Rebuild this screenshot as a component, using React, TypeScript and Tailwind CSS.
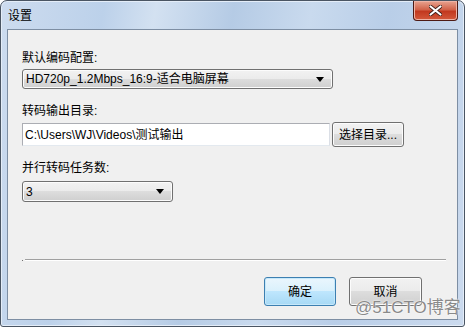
import React from "react";

const font = { fontFamily: '"Liberation Sans", "Noto Sans CJK SC", sans-serif' };

function ComboBox({ value, width }: { value: string; width: string }) {
  return (
    <div
      className={`flex h-full items-center justify-between rounded-[3px] border border-[#707070] bg-[linear-gradient(#f2f2f2_0%,#ebebeb_50%,#dddddd_50%,#cfcfcf_100%)] pl-[3px] pr-[8px] shadow-[inset_0_0_0_1px_#fcfcfc] ${width}`}
    >
      <span className="text-[12px] leading-none text-black">{value}</span>
      <svg width="8" height="5" viewBox="0 0 8 5">
        <path d="M0 0 H8 L4 5 Z" fill="#000" />
      </svg>
    </div>
  );
}

export default function App() {
  return (
    <div className="relative h-[327px] w-[465px] overflow-hidden" style={font}>
      <div className="flex h-full w-full flex-col rounded-t-[7px] rounded-b-[3px] border border-[#4a5563] bg-[linear-gradient(100deg,#cddcef_0%,#bcd1ea_20%,#d3e1f1_30%,#b5cbe5_45%,#c9daee_60%,#b9cee8_75%,#cbdaee_100%)] px-[6px] pb-[6px] shadow-[inset_0_0_0_1px_#e4edf8]">
        {/* title bar */}
        <div className="flex h-[28px] shrink-0 items-start justify-between">
          <span className="pl-[1px] pt-[8px] text-[12px] leading-[14px] text-black">设置</span>
          <div className="flex h-[20px] w-[45px] items-center justify-center rounded-b-[4px] border border-t-0 border-[#4d1a14] bg-[linear-gradient(#e8a491_0%,#d2634a_45%,#c2391f_55%,#d4593b_100%)] shadow-[inset_0_0_0_1px_#eeb3a5]">
            <svg width="13" height="11" viewBox="0 0 13 11">
              <path d="M1.5 1.5 L11.5 9.5 M11.5 1.5 L1.5 9.5" stroke="#3a1a14" strokeWidth="3.6" strokeLinecap="round" />
              <path d="M1.5 1.5 L11.5 9.5 M11.5 1.5 L1.5 9.5" stroke="#ffffff" strokeWidth="2.2" strokeLinecap="round" />
            </svg>
          </div>
        </div>

        {/* client area */}
        <div className="flex flex-1 flex-col border border-[#7d8ea3] bg-[#f0f0f0] pl-[14px] pr-[11px]">
          <div className="mt-[20px] h-[16px] text-[12px] leading-[16px] text-black">默认编码配置:</div>
          <div className="mt-[3px] h-[20px]">
            <ComboBox value="HD720p_1.2Mbps_16:9-适合电脑屏幕" width="w-[311px]" />
          </div>

          <div className="mt-[14px] h-[16px] text-[12px] leading-[16px] text-black">转码输出目录:</div>
          <div className="mt-[3px] flex h-[25px] items-center gap-[2px]">
            <div className="flex h-[23px] w-[308px] items-center border border-[#abadb3] border-b-[#e3e9ef] border-r-[#dbdfe6] bg-white pl-[2px] text-[12px] text-black">
              C:\Users\WJ\Videos\测试输出
            </div>
            <button className="flex h-[25px] w-[72px] items-center justify-center rounded-[3px] border border-[#707070] bg-[linear-gradient(#f2f2f2_0%,#ebebeb_50%,#dddddd_50%,#cfcfcf_100%)] text-[12px] text-black shadow-[inset_0_0_0_1px_#fcfcfc]">
              选择目录...
            </button>
          </div>

          <div className="mt-[13px] h-[16px] text-[12px] leading-[16px] text-black">并行转码任务数:</div>
          <div className="mt-[5px] h-[21px]">
            <ComboBox value="3" width="w-[151px]" />
          </div>

          <div className="mt-[57px] flex items-center">
            <div className="h-px w-[1px] bg-[#707070]" />
            <div className="ml-[2px] h-[2px] flex-1 border-t border-[#a0a0a0] border-b-white border-b" />
          </div>

          <div className="mt-[16px] flex justify-end gap-[13px] pr-[24px]">
            <button className="flex h-[29px] w-[72px] items-center justify-center rounded-[3px] border border-[#3c7fb1] bg-[linear-gradient(#eaf6fd_0%,#d9f0fc_50%,#bee6fd_50%,#a7d9f5_100%)] text-[12px] text-black shadow-[inset_0_0_0_1px_#c6e8fa]">
              确定
            </button>
            <button className="flex h-[29px] w-[73px] items-center justify-center rounded-[3px] border border-[#707070] bg-[linear-gradient(#f2f2f2_0%,#ebebeb_50%,#dddddd_50%,#cfcfcf_100%)] text-[12px] text-black shadow-[inset_0_0_0_1px_#fcfcfc]">
              取消
            </button>
          </div>
        </div>
      </div>

      {/* watermark */}
      <div className="absolute left-[355px] top-[297px] whitespace-nowrap text-[17px] leading-[22px] text-[#8a8a8a] [text-shadow:0_0_2px_#fff,0_0_1px_#fff]">
        @51CTO博客
      </div>
    </div>
  );
}
